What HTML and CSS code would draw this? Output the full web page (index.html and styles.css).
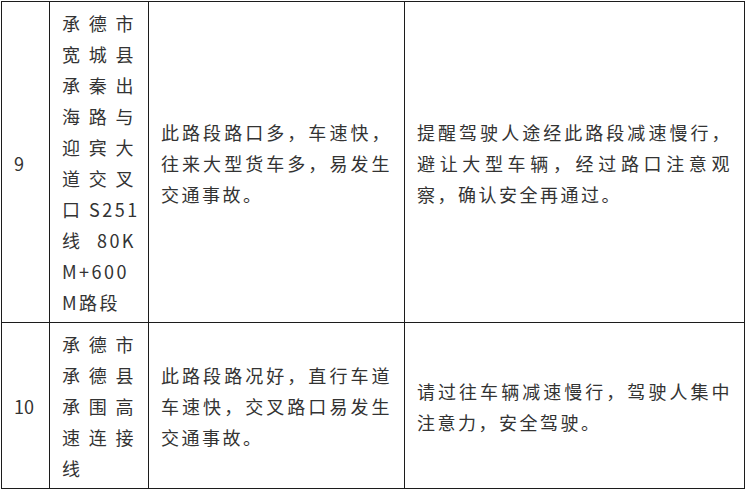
FILE: index.html
```html
<!DOCTYPE html>
<html lang="zh-CN">
<head>
<meta charset="utf-8">
<title>路段提示</title>
<link rel="stylesheet" href="styles.css">
</head>
<body>
<div class="wrap">
  <div class="grid">
    <div class="cell num">9</div>
    <div class="cell place">
      <span class="ln j">承德市</span>
      <span class="ln j">宽城县</span>
      <span class="ln j">承秦出</span>
      <span class="ln j">海路与</span>
      <span class="ln j">迎宾大</span>
      <span class="ln j">道交叉</span>
      <span class="ln j">口 S251</span>
      <span class="ln j">线 80K</span>
      <span class="ln j">M+600</span>
      <span class="ln">M路段</span>
    </div>
    <div class="cell text">
      <span class="ln j">此路段路口多，车速快，</span>
      <span class="ln j">往来大型货车多，易发生</span>
      <span class="ln">交通事故。</span>
    </div>
    <div class="cell text">
      <span class="ln j">提醒驾驶人途经此路段减速慢行，</span>
      <span class="ln j">避让大型车辆，经过路口注意观</span>
      <span class="ln">察，确认安全再通过。</span>
    </div>

    <div class="cell num">10</div>
    <div class="cell place">
      <span class="ln j">承德市</span>
      <span class="ln j">承德县</span>
      <span class="ln j">承围高</span>
      <span class="ln j">速连接</span>
      <span class="ln">线</span>
    </div>
    <div class="cell text">
      <span class="ln j">此路段路况好，直行车道</span>
      <span class="ln j">车速快，交叉路口易发生</span>
      <span class="ln">交通事故。</span>
    </div>
    <div class="cell text">
      <span class="ln j">请过往车辆减速慢行，驾驶人集中</span>
      <span class="ln">注意力，安全驾驶。</span>
    </div>
  </div>
</div>
</body>
</html>
```

FILE: styles.css
```css
html, body {
  margin: 0;
  padding: 0;
  background: #ffffff;
}

.wrap {
  padding: 1px 0 0 1px;
}

.grid {
  display: grid;
  grid-template-columns: 47px 98px 255px 339px;
  gap: 1px;
  padding: 1px;
  width: 742px;
  background: #1c1c1c;
}

.cell {
  background: #ffffff;
  padding: 6px 12px 4px;
  display: flex;
  flex-direction: column;
  justify-content: center;
  font-family: "Noto Sans CJK SC", "Noto Sans", sans-serif;
  font-size: 18px;
  line-height: 31px;
  letter-spacing: 2.5px;
  color: #333333;
}

.num {
  letter-spacing: 0;
}

.ln {
  display: block;
  white-space: nowrap;
  text-align: left;
}

.ln.j {
  text-align: justify;
  text-align-last: justify;
}
```
